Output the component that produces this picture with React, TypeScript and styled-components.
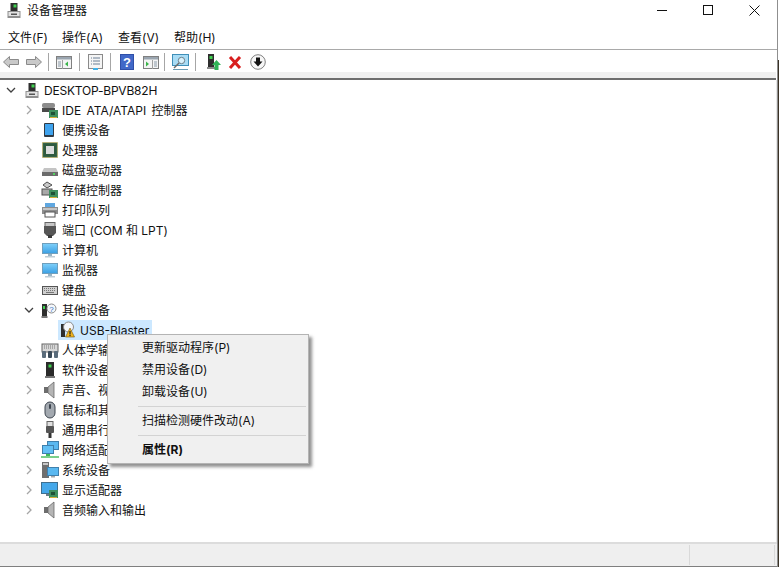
import React from 'react';
import styled, { createGlobalStyle } from 'styled-components';

const GlobalStyle = createGlobalStyle`
  html, body {
    margin: 0;
    padding: 0;
    background: #fff;
    overflow: hidden;
  }
`;

const FONT = `Inter, "Noto Sans CJK SC", sans-serif`;

const Page = styled.div`
  width: 779px;
  height: 567px;
  display: flex;
  background: linear-gradient(#fff 0, #fff 60px, #3a3226 60px, #3a3226 100%);
  font-family: ${FONT};
  font-size: 12px;
  color: #111;
`;

const Window = styled.div`
  position: relative;
  width: 778px;
  height: 567px;
  display: flex;
  flex-direction: column;
  background: #fff;
  border-right: 1px solid #8f8f8f;
  box-sizing: border-box;
`;

const TitleBar = styled.div`
  height: 20px;
  display: flex;
  align-items: center;
  padding-left: 7px;
`;

const TitleText = styled.span`
  font-size: 12px;
  line-height: 20px;
  padding-top: 2px;
  margin-left: 6px;
  flex: 1;
`;

const WindowButton = styled.div`
  width: 46px;
  height: 20px;
  display: flex;
  align-items: center;
  justify-content: center;
`;

const MenuBar = styled.div`
  height: 29px;
  display: flex;
  align-items: center;
  padding: 3px 0 0 8px;
  box-sizing: border-box;
`;

const MenuItem = styled.span<{ $w: number }>`
  width: ${(p) => p.$w}px;
  font-size: 12px;
`;

const ToolBar = styled.div`
  height: 23px;
  border-top: 1px solid #a9a9a9;
  display: flex;
  align-items: center;
  padding-top: 2px;
  box-sizing: border-box;
`;

const ToolButton = styled.div<{ $w: number; $ml?: number }>`
  width: ${(p) => p.$w}px;
  margin-left: ${(p) => p.$ml ?? 0}px;
  height: 18px;
  display: flex;
  align-items: center;
  justify-content: center;
  flex-shrink: 0;
`;

const ToolSep = styled.div<{ $ml?: number }>`
  width: 1px;
  height: 18px;
  margin-left: ${(p) => p.$ml ?? 0}px;
  background: #a6a6a6;
  flex-shrink: 0;
`;

const Band = styled.div`
  height: 6px;
  background: #f0f0f0;
  border-bottom: 2px solid #6e6e6e;
  margin-right: 1px;
`;

const Tree = styled.div`
  flex: 1;
  display: flex;
  flex-direction: column;
  border-right: 1px solid #e6e6e6;
`;

const Row = styled.div<{ $indent: number }>`
  height: 20px;
  display: flex;
  align-items: center;
  padding-left: ${(p) => p.$indent}px;
  flex-shrink: 0;
`;

const Chevron = styled.div`
  width: 14px;
  height: 14px;
  margin-right: 5px;
  display: flex;
  align-items: center;
  justify-content: center;
  flex-shrink: 0;
`;

const NodeIcon = styled.div`
  width: 18px;
  height: 18px;
  margin-right: 3px;
  display: flex;
  align-items: center;
  justify-content: center;
  flex-shrink: 0;
`;

const Label = styled.span<{ $ws?: number; $ls?: number }>`
  font-size: 12px;
  line-height: 20px;
  padding-top: 2px;
  white-space: nowrap;
  word-spacing: ${(p) => p.$ws ?? 0}px;
  letter-spacing: ${(p) => p.$ls ?? 0}px;
`;

const SelectedNode = styled.div`
  display: flex;
  align-items: center;
  height: 20px;
  width: 94px;
  background: #cce8ff;
  padding-left: 1px;
  box-sizing: border-box;
`;

const StatusBar = styled.div`
  height: 25px;
  border-top: 2px solid #dcdcdc;
  border-bottom: 1px solid #7f7f7f;
  background: #efefef;
  display: flex;
  justify-content: flex-end;
  box-sizing: border-box;
`;

const StatusCell = styled.div<{ $w: number }>`
  width: ${(p) => p.$w}px;
  border-left: 1px solid #d9d9d9;
  margin: 1px 0;
  box-sizing: border-box;
`;

const ContextMenu = styled.div`
  position: absolute;
  left: 107px;
  top: 334px;
  width: 202px;
  height: 130px;
  box-sizing: border-box;
  background: #f0f0f0;
  border: 1px solid #b4b4b4;
  box-shadow: 3px 3px 3px rgba(70, 70, 70, 0.6);
  padding: 2px;
`;

const ContextItem = styled.div<{ $bold?: boolean }>`
  height: 22px;
  line-height: 22px;
  padding-left: 32px;
  font-size: 12px;
  font-weight: ${(p) => (p.$bold ? 700 : 400)};
`;

const ContextSep = styled.div`
  height: 1px;
  margin: 3px 0 3px 28px;
  background: #d3d3d3;
`;

const Chev = ({ open }: { open?: boolean }) => (
  <svg width="10" height="10" viewBox="0 0 10 10" fill="none">
    {open ? (
      <path d="M1 3l4 4 4-4" stroke="#404040" strokeWidth="1.3" />
    ) : (
      <path d="M3 1l4 4-4 4" stroke="#a6a6a6" strokeWidth="1.3" />
    )}
  </svg>
);

const Board = () => (
  <g>
    <rect x="8" y="9" width="9" height="8" fill="#3f8f5f" />
    <rect x="10" y="11" width="4" height="3" fill="#1f5237" />
    <rect x="9" y="16" width="7" height="1" fill="#d6b03a" />
  </g>
);

const Ide = () => (
  <svg width="18" height="18" viewBox="0 0 18 18">
    <rect x="1" y="2" width="13" height="5" rx="2" fill="#8c8c8c" />
    <rect x="1" y="7" width="13" height="4" fill="#4a4a4a" />
    <Board />
  </svg>
);

const Portable = () => (
  <svg width="18" height="18" viewBox="0 0 18 18">
    <rect x="3" y="2" width="10" height="14" rx="1" fill="#303a44" />
    <rect x="4" y="3" width="8" height="11" fill="#3fa3ee" />
  </svg>
);

const Cpu = () => (
  <svg width="18" height="18" viewBox="0 0 18 18">
    <rect x="1.5" y="1.5" width="15" height="15" fill="#3d6b4c" stroke="#c9a94a" strokeDasharray="1 1" />
    <rect x="2.5" y="2.5" width="13" height="13" fill="#2f5a3e" />
    <rect x="5" y="5" width="8" height="8" fill="#dcdcdc" />
  </svg>
);

const Disk = () => (
  <svg width="18" height="18" viewBox="0 0 18 18">
    <path d="M3 7h12l2 4H1z" fill="#c4c4c4" />
    <rect x="1" y="11" width="16" height="4" fill="#6b6b6b" />
    <rect x="12" y="12" width="2" height="2" fill="#52d25f" />
  </svg>
);

const Storage = () => (
  <svg width="18" height="18" viewBox="0 0 18 18">
    <path d="M6 1l5 3-5 3-4-3z" fill="#c9c9c9" stroke="#505050" strokeWidth="1" />
    <rect x="1" y="8" width="10" height="6" fill="#a8a8a8" stroke="#505050" />
    <Board />
  </svg>
);

const Printer = () => (
  <svg width="18" height="18" viewBox="0 0 18 18">
    <rect x="4" y="2" width="10" height="5" fill="#5fa7e0" />
    <rect x="1" y="6" width="16" height="7" fill="#8d8d8d" />
    <rect x="2" y="7" width="14" height="2" fill="#c4c4c4" />
    <rect x="4" y="11" width="10" height="5" fill="#fff" stroke="#555" />
  </svg>
);

const Port = () => (
  <svg width="18" height="18" viewBox="0 0 18 18">
    <rect x="4" y="1.5" width="10" height="4" fill="#c6c6c6" stroke="#666" />
    <path d="M3 5h12v7l-3 3H6l-3-3z" fill="#565656" />
    <rect x="7" y="14" width="4" height="3" fill="#3a3a3a" />
  </svg>
);

const Monitor = () => (
  <svg width="18" height="18" viewBox="0 0 18 18">
    <defs>
      <linearGradient id="screen" x1="0" y1="0" x2="0" y2="1">
        <stop offset="0" stopColor="#7fd0fa" />
        <stop offset="1" stopColor="#3a9fe3" />
      </linearGradient>
    </defs>
    <rect x="1.5" y="2.5" width="15" height="10" fill="url(#screen)" stroke="#6f9fbd" />
    <rect x="7" y="13" width="4" height="2" fill="#9ab4c4" />
    <rect x="4" y="15" width="10" height="1.5" fill="#c0cdd6" />
  </svg>
);

const Keyboard = () => (
  <svg width="18" height="18" viewBox="0 0 18 18">
    <rect x="1.5" y="5.5" width="15" height="8" fill="#cfcfcf" stroke="#555" />
    <path d="M3 7.5h12M3 9.5h12" stroke="#777" strokeDasharray="1 1" />
    <path d="M5 11.5h8" stroke="#777" />
  </svg>
);

const Unknown = () => (
  <svg width="18" height="18" viewBox="0 0 18 18">
    <rect x="1" y="3" width="5" height="12" fill="#2e2e2e" />
    <rect x="2" y="5" width="2" height="3" fill="#3fd04f" />
    <rect x="0.5" y="15" width="6" height="2" fill="#777" />
    <circle cx="10.5" cy="7.5" r="4.5" fill="#f4f7fb" stroke="#8a8a8a" />
    <text x="10.5" y="10.5" fontSize="8" textAnchor="middle" fill="#2f6fc0" fontFamily="Liberation Sans">?</text>
  </svg>
);

const UnknownWarn = () => (
  <svg width="18" height="18" viewBox="0 0 18 18">
    <rect x="2" y="3" width="4" height="13" fill="#2e2e2e" />
    <circle cx="9.5" cy="6" r="5" fill="#f4f7fb" stroke="#8a8a8a" />
    <path d="M11 7l4.5 9h-9z" fill="#f3b51c" stroke="#6d5313" strokeWidth="0.6" />
    <rect x="10.4" y="10" width="1.2" height="3.5" fill="#222" />
    <rect x="10.4" y="14" width="1.2" height="1.2" fill="#222" />
  </svg>
);

const Hid = () => (
  <svg width="18" height="18" viewBox="0 0 18 18">
    <rect x="1" y="3" width="16" height="8" fill="#d7d7d7" stroke="#666" />
    <path d="M3 5h12M3 7h12" stroke="#777" strokeDasharray="1 1" />
    <rect x="1" y="10" width="4" height="7" rx="1" fill="#5a6b7a" />
    <rect x="7" y="10" width="4" height="7" rx="1" fill="#3a4a58" />
    <rect x="13" y="10" width="4" height="7" rx="1" fill="#5a6b7a" />
  </svg>
);

const Software = () => (
  <svg width="18" height="18" viewBox="0 0 18 18">
    <rect x="5" y="1" width="8" height="16" fill="#2b2b2b" />
    <rect x="7.5" y="3.5" width="3" height="3" fill="#3fd04f" />
    <rect x="4" y="15" width="10" height="2" fill="#777" />
  </svg>
);

const Speaker = () => (
  <svg width="18" height="18" viewBox="0 0 18 18">
    <rect x="3" y="6" width="4" height="6" fill="#6d6d6d" />
    <path d="M7 6l6-5v16l-6-5z" fill="#b5b5b5" stroke="#6a6a6a" strokeWidth="0.8" />
  </svg>
);

const Mouse = () => (
  <svg width="18" height="18" viewBox="0 0 18 18">
    <rect x="4" y="1" width="10" height="16" rx="5" fill="#a3a9b0" stroke="#3e4650" />
    <rect x="8" y="3" width="2" height="5" rx="1" fill="#3e4650" />
  </svg>
);

const Usb = () => (
  <svg width="18" height="18" viewBox="0 0 18 18">
    <rect x="6" y="0.5" width="6" height="5" fill="#e0e0e0" stroke="#666" />
    <rect x="5" y="5" width="8" height="7" rx="1" fill="#555" />
    <rect x="7.5" y="12" width="3" height="5" fill="#333" />
  </svg>
);

const Network = () => (
  <svg width="18" height="18" viewBox="0 0 18 18">
    <rect x="6.5" y="0.5" width="11" height="8" fill="#5ab8f0" stroke="#3f80ad" />
    <rect x="1.5" y="4.5" width="11" height="8" fill="#62c0f5" stroke="#3f80ad" />
    <rect x="5" y="13" width="4" height="2" fill="#3fb85a" />
    <rect x="0" y="15" width="18" height="2" fill="#7bcf8a" />
  </svg>
);

const SystemDev = () => (
  <svg width="18" height="18" viewBox="0 0 18 18">
    <rect x="1" y="1" width="7" height="16" fill="#6f6f6f" />
    <rect x="2" y="2" width="5" height="2" fill="#c7c7c7" />
    <rect x="6.5" y="6.5" width="11" height="8" fill="#5ab8f0" stroke="#3f80ad" />
    <rect x="10" y="15" width="4" height="1.5" fill="#a9a9a9" />
  </svg>
);

const Display = () => (
  <svg width="18" height="18" viewBox="0 0 18 18">
    <rect x="0.5" y="1.5" width="16" height="11" fill="#45a8ea" stroke="#3f6f8f" />
    <rect x="5" y="13" width="5" height="2" fill="#6b7c88" />
    <Board />
  </svg>
);

const Computer = () => (
  <svg width="14" height="15" viewBox="0 0 14 15">
    <rect x="3.5" y="0" width="7" height="9" fill="#2e2e2e" />
    <rect x="6.5" y="1.5" width="3" height="3" fill="#3fd04f" />
    <rect x="0.5" y="8" width="13" height="7" fill="#8f8f8f" />
    <rect x="1.5" y="9" width="11" height="4" fill="#e3e3e3" />
    <rect x="4" y="10.5" width="6" height="1.5" fill="#555" />
  </svg>
);

const ArrowLeft = () => (
  <svg width="16" height="12" viewBox="0 0 16 12">
    <path d="M0.5 6L6.5 0.5v3h9v5h-9v3z" fill="#c9c9c9" stroke="#8a8a8a" />
  </svg>
);

const ArrowRight = () => (
  <svg width="16" height="12" viewBox="0 0 16 12">
    <path d="M15.5 6L9.5 0.5v3h-9v5h9v3z" fill="#c9c9c9" stroke="#8a8a8a" />
  </svg>
);

const PanelIcon = ({ right }: { right?: boolean }) => (
  <svg width="16" height="13" viewBox="0 0 16 13">
    <rect x="0.5" y="0.5" width="15" height="12" fill="#f4f4f4" stroke="#808080" />
    <rect x="1" y="1" width="14" height="2.5" fill="#9aa5b0" />
    {right ? (
      <>
        <path d="M9.5 4v9" stroke="#a0a0a0" />
        <path d="M3 5.5v5l3-2.5z" fill="#3bb54a" />
        <path d="M11 6h3M11 8h3M11 10h3" stroke="#8a9aa8" />
      </>
    ) : (
      <>
        <path d="M6.5 4v9" stroke="#a0a0a0" />
        <path d="M12 5.5v5l-3-2.5z" fill="#3bb54a" />
        <path d="M2 6h3M2 8h3M2 10h3" stroke="#8a9aa8" />
      </>
    )}
  </svg>
);

const PropsIcon = () => (
  <svg width="15" height="16" viewBox="0 0 15 16">
    <rect x="0.5" y="0.5" width="14" height="14" fill="#f5f5f5" stroke="#8a8a8a" />
    <path d="M3 4h1M5 4h7M3 7h1M5 7h7M3 10h1M5 10h7" stroke="#6b7f95" />
    <rect x="5" y="14" width="5" height="2" fill="#3fb0e8" />
  </svg>
);

const HelpIcon = () => (
  <svg width="14" height="16" viewBox="0 0 14 16">
    <rect width="14" height="16" fill="#2f4fa8" />
    <rect x="1" y="1" width="12" height="14" fill="#4168c8" />
    <text x="7" y="13" fontSize="13" fontWeight="700" textAnchor="middle" fill="#fff" fontFamily="Liberation Sans">?</text>
  </svg>
);

const ScanIcon = () => (
  <svg width="17" height="16" viewBox="0 0 17 16">
    <rect x="0.5" y="0.5" width="16" height="11" fill="#a8dcf5" stroke="#3f8fb8" />
    <circle cx="9.5" cy="6.5" r="3.2" fill="#d9f1fb" stroke="#6b7f8a" />
    <path d="M7 9L2 14" stroke="#6b6b6b" strokeWidth="1.4" />
    <path d="M1 15.5h15" stroke="#6b9db5" />
  </svg>
);

const UpdateIcon = () => (
  <svg width="14" height="16" viewBox="0 0 14 16">
    <rect x="1" y="0" width="6" height="13" fill="#2e2e2e" />
    <rect x="2.5" y="2" width="3" height="3" fill="#3fd04f" />
    <rect x="0" y="13" width="8" height="2" fill="#8a8a8a" />
    <path d="M9.5 6l4.5 5h-2.5v5h-4v-5H5z" fill="#2fb457" />
  </svg>
);

const RemoveIcon = () => (
  <svg width="14" height="13" viewBox="0 0 14 13">
    <path d="M2 1l10 11M12 1L2 12" stroke="#d81e1e" strokeWidth="3" />
  </svg>
);

const DownCircle = () => (
  <svg width="16" height="16" viewBox="0 0 16 16">
    <circle cx="8" cy="8" r="7.3" fill="#f6f6f6" stroke="#808080" />
    <path d="M6 3.5h4v4h2.5L8 12.5 3.5 7.5H6z" fill="#111" />
  </svg>
);

type TreeNode = { icon: React.ReactNode; label: string; ws?: number };

const nodes: TreeNode[] = [
  { icon: <Ide />, label: 'IDE ATA/ATAPI 控制器', ws: 2 },
  { icon: <Portable />, label: '便携设备' },
  { icon: <Cpu />, label: '处理器' },
  { icon: <Disk />, label: '磁盘驱动器' },
  { icon: <Storage />, label: '存储控制器' },
  { icon: <Printer />, label: '打印队列' },
  { icon: <Port />, label: '端口 (COM 和 LPT)' },
  { icon: <Monitor />, label: '计算机' },
  { icon: <Monitor />, label: '监视器' },
  { icon: <Keyboard />, label: '键盘' },
];

const nodesAfter: TreeNode[] = [
  { icon: <Hid />, label: '人体学输入设备' },
  { icon: <Software />, label: '软件设备' },
  { icon: <Speaker />, label: '声音、视频和游戏控制器' },
  { icon: <Mouse />, label: '鼠标和其他指针设备' },
  { icon: <Usb />, label: '通用串行总线控制器' },
  { icon: <Network />, label: '网络适配器' },
  { icon: <SystemDev />, label: '系统设备' },
  { icon: <Display />, label: '显示适配器' },
  { icon: <Speaker />, label: '音频输入和输出' },
];

const Node = ({ icon, label, ws }: TreeNode) => (
  <Row $indent={22}>
    <Chevron>
      <Chev />
    </Chevron>
    <NodeIcon>{icon}</NodeIcon>
    <Label $ws={ws}>{label}</Label>
  </Row>
);

export default function App() {
  return (
    <Page>
      <GlobalStyle />
      <Window>
        <TitleBar>
          <Computer />
          <TitleText>设备管理器</TitleText>
          <WindowButton>
            <svg width="11" height="11" viewBox="0 0 11 11">
              <path d="M0 5.5h10" stroke="#111" />
            </svg>
          </WindowButton>
          <WindowButton>
            <svg width="11" height="11" viewBox="0 0 11 11">
              <rect x="0.5" y="0.5" width="9" height="9" fill="none" stroke="#111" />
            </svg>
          </WindowButton>
          <WindowButton>
            <svg width="11" height="11" viewBox="0 0 11 11">
              <path d="M0.5 0.5l10 10M10.5 0.5l-10 10" stroke="#111" />
            </svg>
          </WindowButton>
        </TitleBar>
        <MenuBar>
          <MenuItem $w={54}>文件(F)</MenuItem>
          <MenuItem $w={56}>操作(A)</MenuItem>
          <MenuItem $w={56}>查看(V)</MenuItem>
          <MenuItem $w={56}>帮助(H)</MenuItem>
        </MenuBar>
        <ToolBar>
          <ToolButton $w={16} $ml={3}><ArrowLeft /></ToolButton>
          <ToolButton $w={16} $ml={7}><ArrowRight /></ToolButton>
          <ToolSep $ml={6} />
          <ToolButton $w={30}><PanelIcon /></ToolButton>
          <ToolSep />
          <ToolButton $w={30}><PropsIcon /></ToolButton>
          <ToolSep />
          <ToolButton $w={14} $ml={9}><HelpIcon /></ToolButton>
          <ToolButton $w={16} $ml={9}><PanelIcon right /></ToolButton>
          <ToolSep $ml={5} />
          <ToolButton $w={30}><ScanIcon /></ToolButton>
          <ToolSep />
          <ToolButton $w={14} $ml={11}><UpdateIcon /></ToolButton>
          <ToolButton $w={14} $ml={7}><RemoveIcon /></ToolButton>
          <ToolButton $w={16} $ml={8}><DownCircle /></ToolButton>
        </ToolBar>
        <Band />
        <Tree>
          <Row $indent={4}>
            <Chevron>
              <Chev open />
            </Chevron>
            <NodeIcon><Computer /></NodeIcon>
            <Label $ls={-0.2}>DESKTOP-BPVB82H</Label>
          </Row>
          {nodes.map((n) => (
            <Node key={n.label} {...n} />
          ))}
          <Row $indent={22}>
            <Chevron>
              <Chev open />
            </Chevron>
            <NodeIcon><Unknown /></NodeIcon>
            <Label>其他设备</Label>
          </Row>
          <Row $indent={58}>
            <SelectedNode>
              <NodeIcon><UnknownWarn /></NodeIcon>
              <Label>USB-Blaster</Label>
            </SelectedNode>
          </Row>
          {nodesAfter.map((n) => (
            <Node key={n.label} {...n} />
          ))}
        </Tree>
        <StatusBar>
          <StatusCell $w={85} />
          <StatusCell $w={3} />
        </StatusBar>
        <ContextMenu>
          <ContextItem>更新驱动程序(P)</ContextItem>
          <ContextItem>禁用设备(D)</ContextItem>
          <ContextItem>卸载设备(U)</ContextItem>
          <ContextSep />
          <ContextItem>扫描检测硬件改动(A)</ContextItem>
          <ContextSep />
          <ContextItem $bold>属性(R)</ContextItem>
        </ContextMenu>
      </Window>
    </Page>
  );
}
